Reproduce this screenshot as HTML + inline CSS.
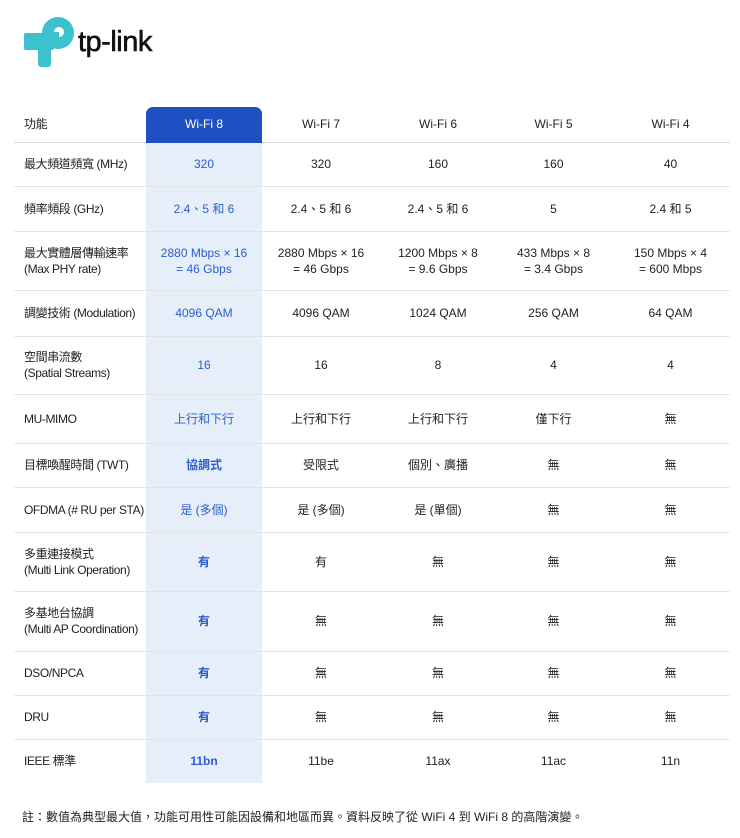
<!DOCTYPE html>
<html><head><meta charset="utf-8"><style>
*{margin:0;padding:0;box-sizing:border-box}
body{width:740px;height:838px;background:#fff;font-family:"Liberation Sans","Noto Sans CJK TC",sans-serif;color:#222;position:relative;overflow:hidden}
.logo{position:absolute;left:22px;top:15px}
.logotext{position:absolute;left:78px;top:26px;font-size:29px;font-weight:normal;letter-spacing:-0.5px;color:#111;-webkit-text-stroke:0.6px #111}
table{position:absolute;left:14px;top:107px;border-collapse:collapse;font-size:12px;table-layout:fixed;width:716px}
td{border-bottom:1px solid #e4e4e4;text-align:center;vertical-align:middle;padding:0;line-height:16px;white-space:nowrap}
td:first-child{text-align:left;padding-left:10px;letter-spacing:-0.4px}
td.h{background:#e6eff9;color:#2c5dcc}
tr.hd td{border-bottom:1px solid #ddd}
tr.hd td.h{background:#1f4fc0;color:#fff;border-radius:7px 7px 0 0;border-bottom-color:#1f4fc0}
b{font-weight:bold}
.note{position:absolute;left:22px;top:808px;font-size:12px;color:#222}
</style></head><body>
<svg class="logo" width="54" height="54" viewBox="0 0 54 54">
<g fill="#3cc2cf">
<circle cx="36" cy="18" r="16"/>
<rect x="2" y="18" width="30" height="17" rx="2"/>
<rect x="16" y="18" width="13" height="34" rx="3"/>
</g>
<circle cx="37" cy="17" r="5" fill="#fff"/>
<rect x="29" y="17" width="8" height="11" fill="#3cc2cf"/>
</svg>
<div class="logotext">tp-link</div>
<table>
<colgroup><col style="width:132px"><col style="width:116px"><col style="width:118px"><col style="width:116px"><col style="width:115px"><col style="width:119px"></colgroup>
<tr class="hd" style="height:35px"><td>功能</td><td class="h">Wi-Fi 8</td><td>Wi-Fi 7</td><td>Wi-Fi 6</td><td>Wi-Fi 5</td><td>Wi-Fi 4</td></tr>
<tr style="height:44px"><td>最大頻道頻寬 (MHz)</td><td class="h">320</td><td>320</td><td>160</td><td>160</td><td>40</td></tr>
<tr style="height:45px"><td>頻率頻段 (GHz)</td><td class="h">2.4、5 和 6</td><td>2.4、5 和 6</td><td>2.4、5 和 6</td><td>5</td><td>2.4 和 5</td></tr>
<tr style="height:59px"><td>最大實體層傳輸速率<br>(Max PHY rate)</td><td class="h">2880 Mbps × 16<br>= 46 Gbps</td><td>2880 Mbps × 16<br>= 46 Gbps</td><td>1200 Mbps × 8<br>= 9.6 Gbps</td><td>433 Mbps × 8<br>= 3.4 Gbps</td><td>150 Mbps × 4<br>= 600 Mbps</td></tr>
<tr style="height:46px"><td>調變技術 (Modulation)</td><td class="h">4096 QAM</td><td>4096 QAM</td><td>1024 QAM</td><td>256 QAM</td><td>64 QAM</td></tr>
<tr style="height:58px"><td>空間串流數<br>(Spatial Streams)</td><td class="h">16</td><td>16</td><td>8</td><td>4</td><td>4</td></tr>
<tr style="height:49px"><td>MU-MIMO</td><td class="h">上行和下行</td><td>上行和下行</td><td>上行和下行</td><td>僅下行</td><td>無</td></tr>
<tr style="height:44px"><td>目標喚醒時間 (TWT)</td><td class="h"><b>協調式</b></td><td>受限式</td><td>個別、廣播</td><td>無</td><td>無</td></tr>
<tr style="height:45px"><td>OFDMA (# RU per STA)</td><td class="h">是 (多個)</td><td>是 (多個)</td><td>是 (單個)</td><td>無</td><td>無</td></tr>
<tr style="height:59px"><td>多重連接模式<br>(Multi Link Operation)</td><td class="h"><b>有</b></td><td>有</td><td>無</td><td>無</td><td>無</td></tr>
<tr style="height:60px"><td>多基地台協調<br>(Multi AP Coordination)</td><td class="h"><b>有</b></td><td>無</td><td>無</td><td>無</td><td>無</td></tr>
<tr style="height:44px"><td>DSO/NPCA</td><td class="h"><b>有</b></td><td>無</td><td>無</td><td>無</td><td>無</td></tr>
<tr style="height:44px"><td>DRU</td><td class="h"><b>有</b></td><td>無</td><td>無</td><td>無</td><td>無</td></tr>
<tr style="height:44px"><td style="border:0">IEEE 標準</td><td class="h" style="border:0"><b>11bn</b></td><td style="border:0">11be</td><td style="border:0">11ax</td><td style="border:0">11ac</td><td style="border:0">11n</td></tr>
</table>
<div class="note">註：數值為典型最大值，功能可用性可能因設備和地區而異。資料反映了從 WiFi 4 到 WiFi 8 的高階演變。</div>
</body></html>
